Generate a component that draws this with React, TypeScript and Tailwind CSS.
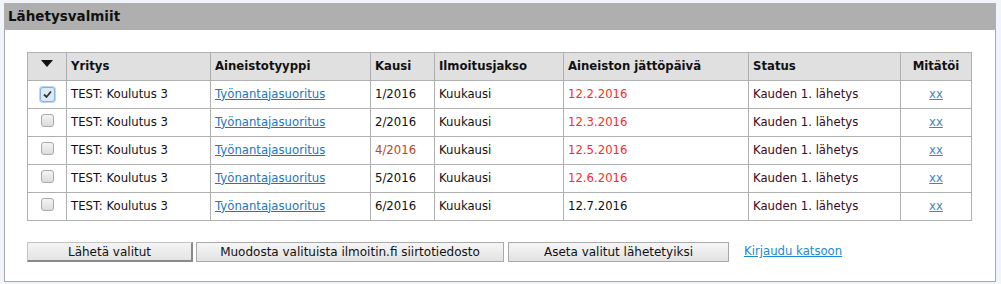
import React from "react";

type Row = {
  checked: boolean;
  kausi: string;
  kausiColor: string;
  date: string;
  dateColor: string;
};

const rows: Row[] = [
  { checked: true, kausi: "1/2016", kausiColor: "text-[#111]", date: "12.2.2016", dateColor: "text-[#ff2a2a]" },
  { checked: false, kausi: "2/2016", kausiColor: "text-[#111]", date: "12.3.2016", dateColor: "text-[#ff2a2a]" },
  { checked: false, kausi: "4/2016", kausiColor: "text-[#b8461c]", date: "12.5.2016", dateColor: "text-[#ff2a2a]" },
  { checked: false, kausi: "5/2016", kausiColor: "text-[#111]", date: "12.6.2016", dateColor: "text-[#ff2a2a]" },
  { checked: false, kausi: "6/2016", kausiColor: "text-[#111]", date: "12.7.2016", dateColor: "text-[#111]" },
];

function Check({ checked }: { checked: boolean }) {
  if (checked) {
    return (
      <span className="inline-flex w-[15px] h-[15px] items-center justify-center rounded-[3px] border border-[#7eb4ea] bg-[#dfe9f5] shadow-[0_0_0_1px_#b9d6f5]">
        <svg width="9" height="9" viewBox="0 0 9 9">
          <path d="M1 4.5 L3.5 7 L8 1.5" fill="none" stroke="#333" strokeWidth="1.8" />
        </svg>
      </span>
    );
  }
  return (
    <span className="inline-block w-[13px] h-[13px] rounded-[3px] border border-[#a9a9a9] bg-gradient-to-b from-[#f4f4f4] to-[#dcdcdc]" />
  );
}

const th = "border border-[#b0b0b0] px-[4px] text-left font-bold";
const td = "border border-[#b0b0b0] px-[4px]";

export default function App() {
  return (
    <div
      className="w-[1001px] h-[284px] bg-[#f1f4f8] pt-[3px] pl-[4px] text-[11.7px] text-[#111]"
      style={{ fontFamily: "Verdana, 'DejaVu Sans', sans-serif" }}
    >
      <div className="w-[992px]">
        <div className="h-[27px] bg-[#afafaf] px-[4px] flex items-center font-bold text-[13.5px] text-[#111]">
          Lähetysvalmiit
        </div>
        <div className="h-[252px] bg-white border border-t-0 border-[#a8a8a8] pl-[22px] pt-[22px]">
          <table className="border-collapse w-[944px] table-fixed">
            <colgroup>
              <col className="w-[39px]" />
              <col className="w-[144px]" />
              <col className="w-[160px]" />
              <col className="w-[64px]" />
              <col className="w-[129px]" />
              <col className="w-[185px]" />
              <col className="w-[152px]" />
              <col className="w-[71px]" />
            </colgroup>
            <thead>
              <tr className="h-[28px] bg-[#e0e0e0]">
                <th className="border border-[#b0b0b0] text-center">
                  <svg width="12" height="8" viewBox="0 0 12 8" className="inline-block mb-[4px]">
                    <path d="M0 0 L12 0 L6 7 Z" fill="#111" />
                  </svg>
                </th>
                <th className={th}>Yritys</th>
                <th className={th}>Aineistotyyppi</th>
                <th className={th}>Kausi</th>
                <th className={th}>Ilmoitusjakso</th>
                <th className={th}>Aineiston jättöpäivä</th>
                <th className={th}>Status</th>
                <th className="border border-[#b0b0b0] text-center font-bold">Mitätöi</th>
              </tr>
            </thead>
            <tbody>
              {rows.map((r, i) => (
                <tr key={i} className="h-[28px]">
                  <td className="border border-[#b0b0b0] text-center">
                    <span className="inline-flex items-center justify-center pt-[2px]">
                      <Check checked={r.checked} />
                    </span>
                  </td>
                  <td className={td}>TEST: Koulutus 3</td>
                  <td className={td}>
                    <a className="text-[#1b76c4] underline cursor-pointer">Työnantajasuoritus</a>
                  </td>
                  <td className={`${td} ${r.kausiColor}`}>{r.kausi}</td>
                  <td className={td}>Kuukausi</td>
                  <td className={`${td} ${r.dateColor}`}>{r.date}</td>
                  <td className={`${td} text-[#3a0a20]`}>Kauden 1. lähetys</td>
                  <td className="border border-[#b0b0b0] text-center">
                    <a className="text-[#3f86c9] underline cursor-pointer">xx</a>
                  </td>
                </tr>
              ))}
            </tbody>
          </table>
          <div className="flex items-center mt-[21px] gap-[4px] text-[12px]">
            <button className="w-[166px] h-[20px] border border-[#c4c4c4] border-b-[2px] border-r-[2px] border-b-[#8a8a8a] border-r-[#8a8a8a] bg-gradient-to-b from-[#f4f4f4] to-[#e4e4e4] text-[#111]">
              Lähetä valitut
            </button>
            <button className="-ml-[1px] w-[308px] h-[20px] border border-[#aaa] bg-gradient-to-b from-[#f6f6f6] to-[#e2e2e2] text-[#111]">
              Muodosta valituista ilmoitin.fi siirtotiedosto
            </button>
            <button className="w-[221px] h-[20px] border border-[#aaa] bg-gradient-to-b from-[#f6f6f6] to-[#e2e2e2] text-[#111]">
              Aseta valitut lähetetyiksi
            </button>
            <a className="ml-[11px] text-[#1b8ad4] underline cursor-pointer text-[11.7px]">Kirjaudu katsoon</a>
          </div>
        </div>
      </div>
    </div>
  );
}
